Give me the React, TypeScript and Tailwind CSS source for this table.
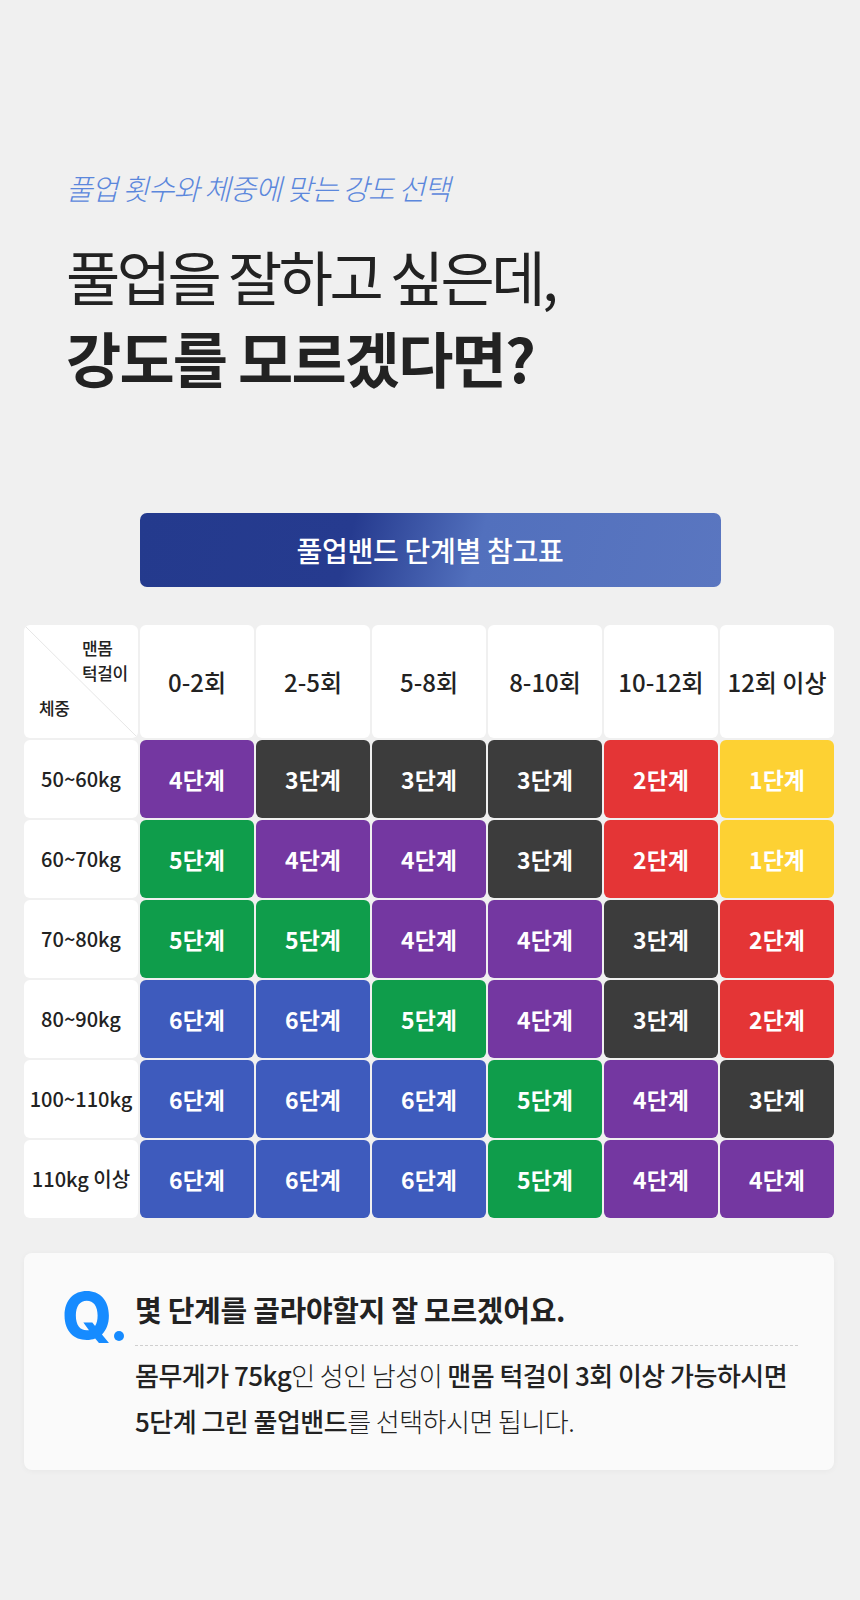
import React from 'react';

const FONT = { fontFamily: '"Noto Sans CJK KR", "Noto Sans", sans-serif' };

const levelColor: Record<number, string> = {
  1: 'bg-[#fdd133]',
  2: 'bg-[#e43536]',
  3: 'bg-[#3c3c3c]',
  4: 'bg-[#7437a1]',
  5: 'bg-[#0f9d4b]',
  6: 'bg-[#3e5bbd]',
};

const counts = ['0-2회', '2-5회', '5-8회', '8-10회', '10-12회', '12회 이상'];

const rows: [string, number[]][] = [
  ['50~60kg', [4, 3, 3, 3, 2, 1]],
  ['60~70kg', [5, 4, 4, 3, 2, 1]],
  ['70~80kg', [5, 5, 4, 4, 3, 2]],
  ['80~90kg', [6, 6, 5, 4, 3, 2]],
  ['100~110kg', [6, 6, 6, 5, 4, 3]],
  ['110kg 이상', [6, 6, 6, 5, 4, 4]],
];

const CornerCell: React.FC = () => (
  <div className="relative h-[113px] rounded-[6px] bg-white overflow-hidden">
    <svg className="absolute inset-0 w-full h-full" preserveAspectRatio="none" viewBox="0 0 100 100">
      <line x1="0" y1="0" x2="100" y2="100" stroke="#e6e6e6" strokeWidth="1" vectorEffect="non-scaling-stroke" />
    </svg>
    <div className="relative flex flex-col h-full pt-[10px] pb-[18px] text-[17px] font-medium text-[#222] leading-[25px] tracking-[-0.02em]">
      <div className="pl-[58px]">맨몸</div>
      <div className="pl-[58px]">턱걸이</div>
      <div className="mt-auto pl-[15px]">체중</div>
    </div>
  </div>
);

const App: React.FC = () => {
  return (
    <div className="min-h-[1600px] bg-[#f0f0f0] pb-[130px]" style={FONT}>
      {/* heading */}
      <div className="px-[66px] pt-[165px]">
        <p className="text-[#5b87dc] text-[29px] font-light italic tracking-[-0.04em] leading-[44px]">
          풀업 횟수와 체중에 맞는 강도 선택
        </p>
        <h1 className="mt-[26px] text-[#222]">
          <div className="text-[59px] leading-[81px] font-normal tracking-[-0.06em]">풀업을 잘하고 싶은데,</div>
          <div className="text-[60px] leading-[81px] font-bold tracking-[-0.03em]">강도를 모르겠다면?</div>
        </h1>
      </div>

      {/* table title */}
      <div className="mt-[116px] flex justify-center">
        <div className="w-[581px] h-[74px] rounded-[7px] flex items-center justify-center bg-[linear-gradient(105deg,#243a8d_0%,#263b8f_36%,#5270bd_58%,#5a76c0_100%)]">
          <span className="text-white text-[28px] font-medium tracking-[-0.01em]">풀업밴드 단계별 참고표</span>
        </div>
      </div>

      {/* table */}
      <div className="mt-[38px] px-[24px] mr-[2px]">
        <div className="grid grid-cols-7 gap-[2px]">
          <CornerCell />
          {counts.map((c) => (
            <div
              key={c}
              className="h-[113px] rounded-[6px] bg-white flex items-center justify-center text-[24px] font-medium text-[#222]"
            >
              {c}
            </div>
          ))}
          {rows.map(([weight, levels]) => (
            <React.Fragment key={weight}>
              <div className="h-[78px] rounded-[6px] bg-white flex items-center justify-center text-[20px] font-medium text-[#222]">
                {weight}
              </div>
              {levels.map((lv, i) => (
                <div
                  key={i}
                  className={`h-[78px] rounded-[6px] ${levelColor[lv]} flex items-center justify-center text-white text-[23px] font-bold`}
                >
                  {lv}단계
                </div>
              ))}
            </React.Fragment>
          ))}
        </div>
      </div>

      {/* Q box */}
      <div className="mt-[35px] mx-[24px] mr-[26px] rounded-[8px] bg-[#fafafa] shadow-[0_1px_6px_rgba(0,0,0,0.04)] pl-[38px] pr-[36px] pt-[30px] pb-[26px]">
        <div className="flex items-start">
          <div className="w-[73px] shrink-0 flex items-end pt-[6px]">
            <span
              className="text-[#168bff] text-[64px] font-extrabold leading-[54px]"
              style={{ fontFamily: 'Inter, "Liberation Sans", sans-serif' }}
            >
              Q
            </span>
            <span className="ml-[2px] mb-[2px] w-[10px] h-[10px] rounded-full bg-[#168bff]" />
          </div>
          <div className="flex-1">
            <p className="pt-[6px] text-[29px] font-bold text-[#222] tracking-[-0.01em] leading-[40px]">
              몇 단계를 골라야할지 잘 모르겠어요.
            </p>
            <div className="mt-[16px] border-t border-dashed border-[#cfcfcf]" />
            <p className="mt-[6px] text-[26px] text-[#222] tracking-[-0.02em] leading-[46px]">
              <span className="font-medium">몸무게가 75kg</span>
              <span className="font-light">인 성인 남성이 </span>
              <span className="font-medium">맨몸 턱걸이 3회 이상 가능하시면</span>
              <br />
              <span className="font-medium">5단계 그린 풀업밴드</span>
              <span className="font-light">를 선택하시면 됩니다.</span>
            </p>
          </div>
        </div>
      </div>
    </div>
  );
};

export default App;
